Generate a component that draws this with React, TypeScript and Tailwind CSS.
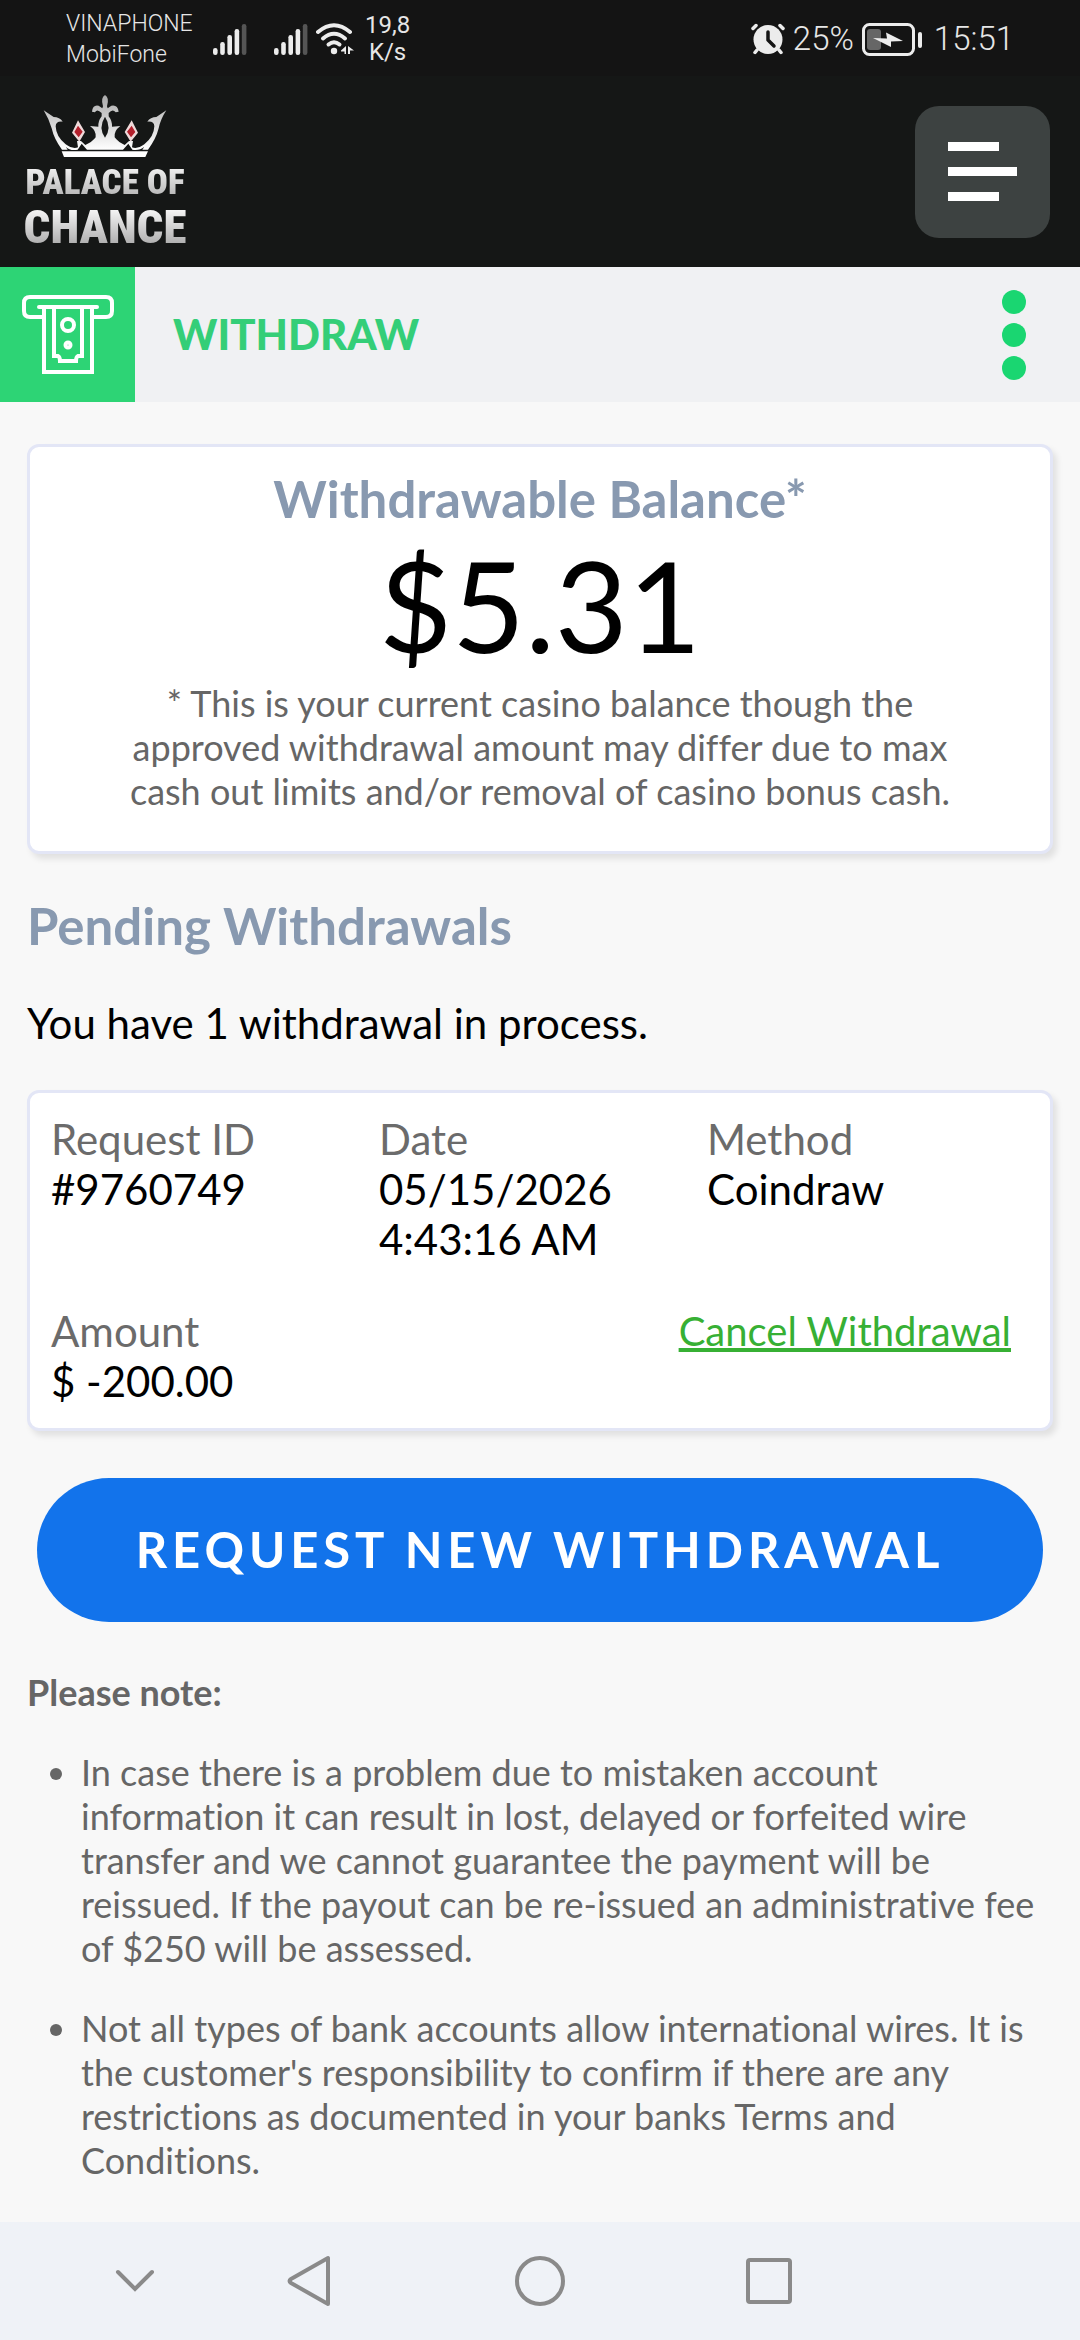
const LATO = "font-['Lato','Liberation_Sans',sans-serif] [font-variant-ligatures:no-common-ligatures]"

const REQUEST = [
  { label: 'Request ID', lines: ['#9760749'] },
  { label: 'Date', lines: ['05/15/2026', '4:43:16 AM'] },
  { label: 'Method', lines: ['Coindraw'] },
]

const NOTES = [
  'In case there is a problem due to mistaken account information it can result in lost, delayed or forfeited wire transfer and we cannot guarantee the payment will be reissued. If the payout can be re-issued an administrative fee of $250 will be assessed.',
  "Not all types of bank accounts allow international wires. It is the customer's responsibility to confirm if there are any restrictions as documented in your banks Terms and Conditions.",
]

function SignalIcon() {
  const tops = [24, 18, 11, 5, 0]
  return (
    <svg width="34" height="31" viewBox="0 0 34 31" aria-hidden="true">
      {tops.map((y, i) => (
        <rect key={i} x={i * 7.2} y={y} width="4.6" height={31 - y} rx="2.2" fill={i === 4 ? '#555' : '#ececec'} />
      ))}
    </svg>
  )
}

function WifiIcon() {
  return (
    <svg width="38" height="32" viewBox="0 0 38 32" fill="none" stroke="#ececec" strokeWidth="4" strokeLinecap="round" aria-hidden="true">
      <path d="M2 9Q18 -4.500 34 9" />
      <path d="M7 15.500Q18 6 29 15.500" />
      <path d="M12.500 21.500Q18 17 23.500 21.500" />
      <circle cx="18" cy="28" r="3.200" fill="#ececec" stroke="none" />
      <path d="M25 27.500L30 23V31H28.500V28.500H25ZM32 23L38 27.500H34V31H32Z" fill="#ececec" stroke="none" />
    </svg>
  )
}

function AlarmIcon() {
  return (
    <svg width="34" height="32" viewBox="0 0 34 32" fill="none" aria-hidden="true">
      <path d="M2 5.500L5 2.500M32 5.500L29 2.500M6 27L4 29.500M28 27L30 29.500" stroke="#ececec" strokeWidth="3.500" strokeLinecap="round" />
      <circle cx="17" cy="16.500" r="14.500" fill="#ececec" />
      <path d="M17 9V17L23 23" stroke="#141414" strokeWidth="3.500" strokeLinecap="round" strokeLinejoin="round" />
    </svg>
  )
}

function BatteryIcon() {
  return (
    <svg width="60" height="33" viewBox="0 0 60 33" fill="none" aria-hidden="true">
      <rect x="1.500" y="1.500" width="50" height="30" rx="6" stroke="#ececec" strokeWidth="3" />
      <rect x="5" y="6" width="14" height="21" rx="3" fill="#666" />
      <path d="M11 15L25 15.500L24 9.500L41 18L29 18.500L29 24Z" fill="#ececec" />
      <rect x="56" y="9" width="4" height="16" rx="2" fill="#ececec" />
    </svg>
  )
}

function Crown() {
  return (
    <svg width="124" height="62" viewBox="100 30 368 186" aria-hidden="true">
      <defs>
        <linearGradient id="crown" x1="0" y1="0" x2="0" y2="1">
          <stop offset="0" stopColor="#a9a9a9" />
          <stop offset="1" stopColor="#ffffff" />
        </linearGradient>
      </defs>
      <path
        fill="url(#crown)"
        fillRule="evenodd"
        d="M100 76L130 96Q148 96 157 110Q136 108 136 124Q137 155 166 178Q186 193 203 187L200 168L212 168L225 180Q246 171 256 157Q259 138 239 123L264 125Q263 108 274 94V84Q260 70 254 82L245 80Q247 58 265 62L276 70L278 64Q270 38 284 30Q298 38 290 64L292 70L303 62Q322 58 325 80L316 82Q307 70 295 84V94Q306 108 305 125L330 123Q310 138 313 157Q323 171 343 180L356 168L368 168L365 187Q382 193 402 178Q431 155 432 124Q432 108 411 110Q420 96 438 96L468 76Q450 104 445 130Q437 162 413 194H396L402 185Q387 198 366 194L354 176L338 194H230L214 176L202 194Q180 199 166 185L172 194H155Q131 162 124 130Q117 104 100 76ZM284 95Q263 128 284 158Q305 128 284 95Z"
      />
      <path d="M203 106L224 141L207 170L185 143ZM364 106L383 143L361 170L343 141Z" fill="#efdada" />
      <path d="M203 122L217 140L205 157L192 141ZM364 122L375 141L362 157L350 140Z" fill="#b4202c" />
      <path d="M154 199H413L405 216H161Z" fill="#fff" />
    </svg>
  )
}

function WithdrawIcon() {
  return (
    <svg width="92" height="80" viewBox="0 0 92 80" fill="none" stroke="#fff" strokeWidth="4" aria-hidden="true">
      <path d="M22 22H8Q2 22 2 16V8Q2 2 8 2H84Q90 2 90 8V16Q90 22 84 22H70" />
      <path d="M17 12H75" strokeLinecap="round" />
      <path d="M22 13V77H70V13M32 13V61H36Q38 62 38 66H54Q54 62 56 61H60V13" />
      <circle cx="46" cy="30" r="6" />
      <circle cx="46" cy="50" r="2.500" />
    </svg>
  )
}

function StatusBar() {
  return (
    <div className="flex h-[76px] items-center justify-between bg-[#141414] px-[66px] pt-[2px] font-['Roboto',sans-serif] text-[#e6e6e6]">
      <div className="flex items-center">
        <div className="w-[147px] text-[23px] leading-[31px] font-light">
          <div>VINAPHONE</div>
          <div>MobiFone</div>
        </div>
        <SignalIcon />
        <div className="ml-[27px] flex items-center gap-2">
          <SignalIcon />
          <WifiIcon />
        </div>
        <div className="ml-[11px] text-center text-2xl leading-[27px]">
          <div>19,8</div>
          <div>K/s</div>
        </div>
      </div>
      <div className="flex items-center gap-2 text-[33px] font-light">
        <AlarmIcon />
        <span>25%</span>
        <BatteryIcon />
        <span className="ml-1">15:51</span>
      </div>
    </div>
  )
}

function Header() {
  return (
    <header className="flex h-[191px] items-center justify-between bg-[#151716] pr-[30px] pl-[24px]">
      <a href="#" className="flex w-[162px] flex-col items-center font-['Roboto_Condensed','Roboto',sans-serif] font-black" aria-label="Palace of Chance">
        <Crown />
        <span className="mt-1 bg-linear-to-b from-white to-[#a5a5a5] bg-clip-text text-[35px] leading-[44px] whitespace-nowrap text-transparent">PALACE OF</span>
        <span className="bg-linear-to-b from-white to-[#a5a5a5] bg-clip-text text-[47px] leading-[44px] text-transparent">CHANCE</span>
      </a>
      <button type="button" aria-label="Menu" className="flex h-[132px] w-[135px] flex-col justify-center gap-4 rounded-3xl bg-[#3d4241] pl-[33px]">
        <span className="h-[9px] w-[51px] bg-white" />
        <span className="h-[9px] w-[69px] bg-white" />
        <span className="h-[9px] w-[51px] bg-white" />
      </button>
    </header>
  )
}

function TitleBar() {
  return (
    <div className="flex h-[135px] items-center bg-[#f0f1f3]">
      <div className="flex h-full w-[135px] items-center justify-center bg-[#2dd475]">
        <WithdrawIcon />
      </div>
      <h1 className="flex-1 pl-[38px] text-[42px] font-black text-[#34ce78]">WITHDRAW</h1>
      <button type="button" aria-label="More options" className="mr-[54px] flex flex-col gap-[9px]">
        <span className="size-6 rounded-full bg-[#1ad671]" />
        <span className="size-6 rounded-full bg-[#1ad671]" />
        <span className="size-6 rounded-full bg-[#1ad671]" />
      </button>
    </div>
  )
}

function NavBar() {
  return (
    <nav className="flex h-[118px] items-center bg-[#eff2f7] pl-[115px]">
      <button type="button" aria-label="Hide" className="w-[172px]">
        <svg width="40" height="24" viewBox="0 0 40 24" fill="none" stroke="#8a8a8a" strokeWidth="4" strokeLinecap="round"><path d="M3 3L20 20L37 3" /></svg>
      </button>
      <button type="button" aria-label="Back" className="w-[228px]">
        <svg width="44" height="52" viewBox="0 0 44 52" fill="none" stroke="#8a8a8a" strokeWidth="4" strokeLinejoin="round"><path d="M41 3V49L4 28Q1 26 4 24Z" /></svg>
      </button>
      <button type="button" aria-label="Home" className="w-[231px]">
        <svg width="50" height="50" viewBox="0 0 50 50" fill="none" stroke="#8a8a8a" strokeWidth="4"><circle cx="25" cy="25" r="23" /></svg>
      </button>
      <button type="button" aria-label="Recent apps">
        <svg width="46" height="46" viewBox="0 0 46 46" fill="none" stroke="#8a8a8a" strokeWidth="4"><rect x="2" y="2" width="42" height="42" rx="2" /></svg>
      </button>
    </nav>
  )
}

const CARD = 'rounded-xl border-3 border-[#e3e6f6] bg-white shadow-[4px_5px_6px_#00000018]'

export default function App() {
  return (
    <div className={`flex min-h-screen flex-col bg-[#f8f8f8] text-black ${LATO}`}>
      <StatusBar />
      <Header />
      <TitleBar />

      <main className="flex-1 px-[27px] pt-[42px]">
        <section className={`${CARD} px-[90px] pt-[22px] pb-[38px] text-center`}>
          <h2 className="text-[51px] leading-[60px] font-bold text-[#8899b0]">Withdrawable Balance*</h2>
          <p className="text-[126px] leading-[152px]">$5.31</p>
          <p className="text-[36px] leading-[44px] text-[#666]">
            * This is your current casino balance though the approved withdrawal amount may differ due to max cash out limits and/or removal of casino bonus cash.
          </p>
        </section>

        <h2 className="mt-[42px] text-[51px] leading-[60px] font-bold text-[#8899b0]">Pending Withdrawals</h2>
        <p className="mt-[42px] text-[42px] leading-[50px]">You have 1 withdrawal in process.</p>

        <section className={`${CARD} mt-[42px] pt-[21px] pr-[15px] pb-[22px] pl-[21px] text-[42px] leading-[50px]`}>
          <dl className="grid grid-cols-3">
            {REQUEST.map(r => (
              <div key={r.label}>
                <dt className="text-[#6b6b6b]">{r.label}</dt>
                {r.lines.map(l => <dd key={l}>{l}</dd>)}
              </div>
            ))}
          </dl>
          <div className="mt-[42px] flex items-start justify-between pr-[24px]">
            <dl>
              <dt className="text-[#6b6b6b]">Amount</dt>
              <dd>$ -200.00</dd>
            </dl>
            <a href="#" className="text-[40px] text-[#37b034] underline">Cancel Withdrawal</a>
          </div>
        </section>

        <div className="mt-[47px] px-[10px]">
          <button type="button" className="h-[144px] w-full rounded-full bg-[#1273eb] text-[49px] font-bold tracking-widest text-white">
            REQUEST NEW WITHDRAWAL
          </button>
        </div>

        <div className="pt-[48px] text-[36px] leading-[44px] text-[#666]">
          <p className="font-bold">Please note:</p>
          <ul className="mt-[36px] flex list-disc flex-col gap-[36px] pl-[54px]">
            {NOTES.map(n => <li key={n}>{n}</li>)}
          </ul>
        </div>
      </main>

      <NavBar />
    </div>
  )
}
